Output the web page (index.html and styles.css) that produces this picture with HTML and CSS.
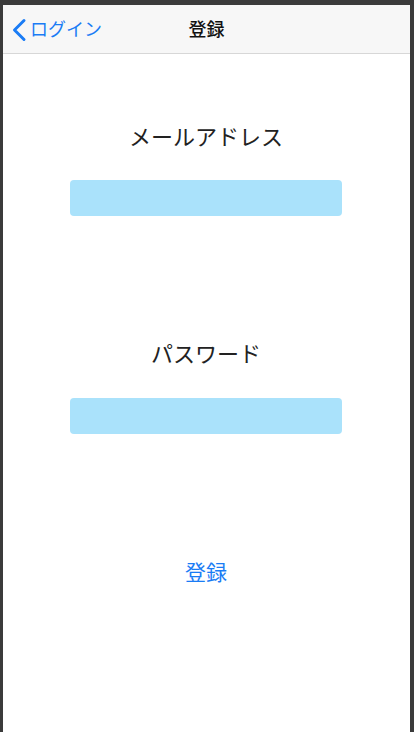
FILE: index.html
```html
<!DOCTYPE html>
<html lang="ja">
<head>
<meta charset="utf-8">
<link rel="stylesheet" href="styles.css">
</head>
<body>
<div class="frame">
  <header class="nav">
    <a class="back">
      <svg class="chev" width="16" height="24" viewBox="0 0 16 24"><path d="M13 2.5 L3.5 12 L13 21.5" fill="none" stroke="#1a7cf5" stroke-width="3" stroke-linecap="round" stroke-linejoin="round"/></svg>
      <span class="back-text">ログイン</span>
    </a>
    <div class="title">登録</div>
  </header>
  <main class="content">
    <div class="label first">メールアドレス</div>
    <div class="field"></div>
    <div class="label second">パスワード</div>
    <div class="field"></div>
    <div class="submit">登録</div>
  </main>
</div>
</body>
</html>
```
FILE: styles.css
```css
html, body {
  margin: 0;
  padding: 0;
  background: #3b3b3b;
}
.frame {
  margin: 5px 4px 0 3px;
  height: 727px;
  background: #ffffff;
  font-family: "Noto Sans CJK JP", "Noto Sans", sans-serif;
  overflow: hidden;
}
.nav {
  height: 48px;
  background: #f7f7f7;
  border-bottom: 1px solid #d7d7d7;
  display: flex;
  align-items: center;
  justify-content: center;
  position: relative;
}
.back {
  position: absolute;
  left: 8px;
  top: 0;
  height: 48px;
  display: flex;
  align-items: center;
  color: #1a7cf5;
  font-size: 18px;
  gap: 3px;
}
.chev {
  display: block;
  margin-top: 1px;
}
.back-text {
  line-height: 24px;
  margin-top: -2px;
}
.title {
  font-size: 18px;
  font-weight: 500;
  color: #111;
  line-height: 24px;
  margin-top: -2px;
}
.content {
  display: flex;
  flex-direction: column;
  align-items: center;
  padding-right: 1px;
}
.label {
  font-size: 22px;
  line-height: 30px;
  color: #222;
}
.label.first { margin-top: 66px; margin-bottom: 30px; }
.label.second { margin-top: 121px; margin-bottom: 31px; }
.field {
  width: 272px;
  height: 36px;
  background: #aae2fb;
  border-radius: 4px;
}
.submit {
  margin-top: 122px;
  font-size: 21px;
  line-height: 30px;
  color: #1a7cf5;
}
```
